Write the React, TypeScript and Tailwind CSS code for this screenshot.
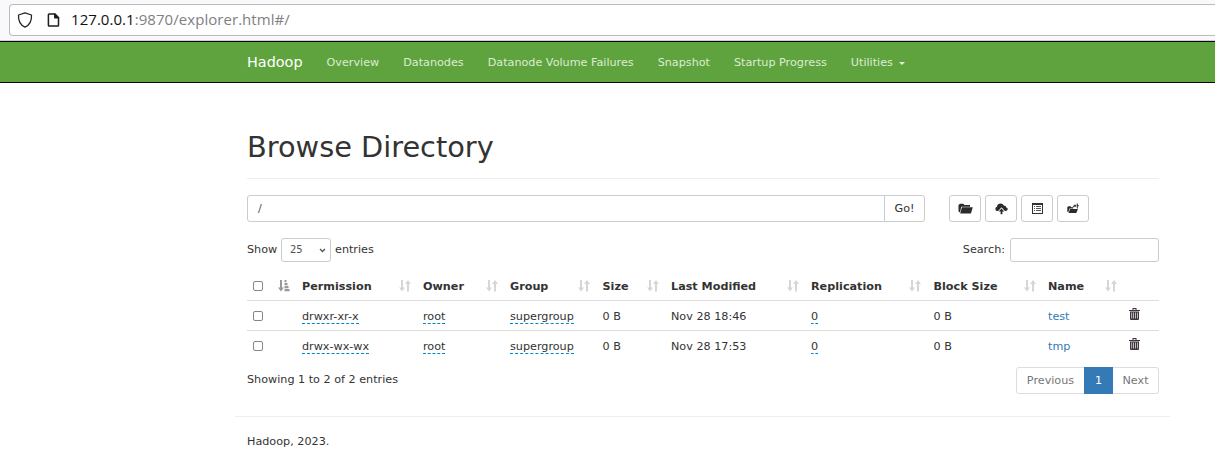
import React from "react";

const columns = ["", "Permission", "Owner", "Group", "Size", "Last Modified", "Replication", "Block Size", "Name"];

const rows = [
  { permission: "drwxr-xr-x", owner: "root", group: "supergroup", size: "0 B", modified: "Nov 28 18:46", replication: "0", block: "0 B", name: "test" },
  { permission: "drwx-wx-wx", owner: "root", group: "supergroup", size: "0 B", modified: "Nov 28 17:53", replication: "0", block: "0 B", name: "tmp" },
];

const navItems = ["Overview", "Datanodes", "Datanode Volume Failures", "Snapshot", "Startup Progress"];

const gridCols = "grid grid-cols-[49px_121px_87px_92.5px_68.5px_140px_122.5px_114.5px_81px_36px]";

function SortIcon() {
  return (
    <svg width="12" height="12" viewBox="0 0 12 12" className="shrink-0" fill="#d6d6d6">
      <path d="M2 0h2v7.500h2L3 11.500 0 7.500h2zM8 11.500h2V4h2L9 0 6 4h2z" />
    </svg>
  );
}

function SortActiveIcon() {
  return (
    <svg width="12" height="12" viewBox="0 0 12 12" className="shrink-0" fill="#999">
      <path d="M2 0h2v7.500h2L3 11.500 0 7.500h2zM6.500 0h2v2.300h-2zM6.500 3h3v2.300h-3zM6.500 6h4v2.300h-4zM6.500 9h5v2.300h-5z" />
    </svg>
  );
}

function CheckBox() {
  return <span className="block h-[10px] w-[10px] rounded-[2px] border border-[#858590] bg-white" />;
}

function FolderIcon() {
  return (
    <svg width="15" height="12" viewBox="0 0 15 12" fill="#2b2b2b">
      <path d="M.5 8.500V2L2 .8h3.200L6.500 2H12v1.700H3.200L2 9.500z" />
      <path d="M3.900 4.300h10.900l-1.900 6.300H2.200z" />
    </svg>
  );
}

function UploadIcon() {
  return (
    <svg width="13" height="12" viewBox="0 0 13 12" fill="#2b2b2b">
      <path d="M2.700 8C1.200 8 .4 7.100.4 5.900c0-1 .7-1.900 1.600-2.100C2.200 1.800 3.700.6 5.600.6c1.400 0 2.500.7 3.100 1.800 1.500 0 2.400.9 2.500 2 1 .2 1.500.9 1.500 1.700C12.700 7.200 11.900 8 10.700 8h-.8L6.500 4.300 3.200 8z" />
      <path d="M6.500 5.400 9.300 8.400H7.400v2.800H5.600V8.400H3.700z" />
    </svg>
  );
}

function ListIcon() {
  return (
    <svg width="11" height="11" viewBox="0 0 11 11" fill="#303035" shapeRendering="crispEdges">
      <path fillRule="evenodd" d="M0 0h11v11H0zM1 2v8h9V2z" />
      <path d="M2 3h1v1H2zM4 3h5v1H4zM2 5h1v1H2zM4 5h5v1H4zM2 7h1v1H2zM4 7h5v1H4z" fill="#55555a" />
    </svg>
  );
}

function FolderMoveIcon() {
  return (
    <svg width="12" height="11" viewBox="0 0 12 11" fill="#2b2b2b">
      <path d="M.3 8.500V4.300l1-1h2.200l.8.900h2v1.300H2.500L1.300 9.500z" />
      <path d="M3 6.100h7.900L9.300 10H1.600z" />
      <path d="M5.700 4.400C5.700 3 6.500 2.200 7.700 2.200V1.100L9.500 2.800 7.700 4.500V3.500C6.900 3.500 6.300 3.800 5.700 4.400zM9.800.5h1v1.700h1v1h-1v2.200h-1z" />
    </svg>
  );
}

function TrashIcon() {
  return (
    <svg width="11" height="13" viewBox="0 0 11 13" fill="#3c333b">
      <path d="M3.500 0h4v2H11v1H0V2h3.500zM4.500 1v1h2V1z" fillRule="evenodd" />
      <path d="M1 3.500h9V11q0 1-1 1H2q-1 0-1-1z" />
      <path d="M2.300 4.500h.8v6h-.8zM4.200 4.500H5v6h-.8zM6.100 4.500h.8v6h-.8zM8 4.500h.8v6H8z" fill="#e2dce0" />
    </svg>
  );
}

function IconButton({ children }: { children: React.ReactNode }) {
  return (
    <button className="flex h-[27px] w-8 items-center justify-center rounded-[3px] border border-[#ccc] bg-white">
      {children}
    </button>
  );
}

function Editable({ children }: { children: React.ReactNode }) {
  return <span className="block h-[15px] w-fit border-b border-dashed border-[#0088cc] leading-[16px]">{children}</span>;
}

export default function App() {
  return (
    <div className="h-[475px] w-full overflow-hidden bg-white font-['DejaVu_Sans',sans-serif] text-[11.200px] text-[#333]">
      <div className="h-[41px] border-b border-[#cfcfd2] bg-[#f9f9fb] pl-[9px] pt-1">
        <div className="flex h-8 items-center rounded-l-[4px] border border-r-0 border-[#bcbcbe] bg-white pl-[7px]">
          <svg width="16" height="16" viewBox="0 0 16 16" fill="none" stroke="#26262b" strokeWidth="1.300" strokeLinejoin="round">
            <path d="M8 .8 14.500 3c.3 5-1.200 9.700-6.500 12.200C2.700 12.700 1.200 8 1.500 3z" />
          </svg>
          <svg width="13" height="14" viewBox="0 0 13 14" className="ml-[14px]" fill="none" stroke="#1c1c20" strokeWidth="1.500" strokeLinejoin="round">
            <path d="M2.200 1h5.600l3.700 3.700v7.500q0 .8-.8.800H2.200q-.8 0-.8-.8V1.800Q1.400 1 2.200 1z" />
            <path d="M7.800 1v3.700h3.700z" fill="#1c1c20" />
          </svg>
          <div className="mb-px ml-[11px] whitespace-nowrap font-['Open_Sans',sans-serif] text-[15px] leading-none tracking-[0.050px] text-[#808085]">
            <span className="text-[#111]">127.0.0.1</span>:9870/explorer.html#/
          </div>
        </div>
      </div>

      <nav className="flex h-[42px] items-center border-y border-[#080808] bg-[#5fa33e] pl-[247px] text-[#dcecd4]">
        <span className="mr-6 mt-px text-[14.400px] text-white">Hadoop</span>
        <div className="mt-[2px] flex gap-6">
          {navItems.map((item) => (
            <span key={item} className="whitespace-nowrap">{item}</span>
          ))}
          <span className="flex items-center">
            Utilities
            <span className="ml-[6px] mt-[2px] border-x-[3px] border-t-[3px] border-x-transparent border-t-[#e4f0de]" />
          </span>
        </div>
      </nav>

      <main className="ml-[247px] w-[912px]">
        <header className="h-24 border-b border-[#eee] pt-[47px]">
          <h1 className="text-[28.800px] leading-[34px]">Browse Directory</h1>
        </header>

        <div className="mt-4 flex h-[27px]">
          <div className="flex w-[638px] items-center rounded-l-[3px] border border-[#ccc] pl-[10px] pt-px text-[#555]">/</div>
          <button className="-ml-px mr-6 w-[41px] rounded-r-[3px] border border-[#ccc] pt-[2px]">Go!</button>
          <div className="flex gap-1">
            <IconButton><FolderIcon /></IconButton>
            <IconButton><UploadIcon /></IconButton>
            <IconButton><ListIcon /></IconButton>
            <IconButton><FolderMoveIcon /></IconButton>
          </div>
        </div>

        <div className="mt-4 flex h-6 items-center justify-between">
          <div className="flex items-center gap-1">
            <span className="w-[30px] whitespace-nowrap">Show</span>
            <div className="flex h-6 w-[50px] items-center justify-between rounded-[3px] border border-[#ccc] pb-px pl-2 pr-1 text-[10px] text-[#555]">
              25
              <svg width="7" height="5" viewBox="0 0 7 5" className="mt-px" fill="none" stroke="#555" strokeWidth="1.300"><path d="M1 1l2.500 2.500L6 1" /></svg>
            </div>
            entries
          </div>
          <div className="flex items-center gap-[5px]">
            Search:
            <div className="h-6 w-[149px] rounded-[3px] border border-[#ccc]" />
          </div>
        </div>

        <section className="mt-[9px]">
          <div className={`${gridCols} h-[30px] border-b border-[#ddd] font-bold`}>
            {columns.map((label, i) => (
              <div key={i} className="flex items-center justify-between whitespace-nowrap pl-[6px] pr-[6.500px]">
                {i === 0 ? <CheckBox /> : <span className="pt-[3px]">{label}</span>}
                {i === 0 ? <SortActiveIcon /> : <SortIcon />}
              </div>
            ))}
          </div>
          {rows.map((row, i) => (
            <div key={row.name} className={`${gridCols} h-[30px] items-center whitespace-nowrap border-b leading-4 *:pl-[6px] ${i === 0 ? "border-[#ddd]" : "border-transparent"}`}>
              <div><CheckBox /></div>
              <div className="pt-px"><Editable>{row.permission}</Editable></div>
              <div className="pt-px"><Editable>{row.owner}</Editable></div>
              <div className="pt-px"><Editable>{row.group}</Editable></div>
              <div className="pt-[2px]">{row.size}</div>
              <div className="pt-[2px]">{row.modified}</div>
              <div className="pt-px"><Editable>{row.replication}</Editable></div>
              <div className="pt-[2px]">{row.block}</div>
              <div className="pt-[2px] text-[#337ab7]">{row.name}</div>
              <div className="pb-[2px]"><TrashIcon /></div>
            </div>
          ))}
        </section>

        <div className="mt-[6px] flex h-[27px] justify-between">
          <div className="leading-[25px]">Showing 1 to 2 of 2 entries</div>
          <div className="flex text-center leading-[25px] text-[#777]">
            <span className="w-[69px] rounded-l-[3px] border border-[#ddd]">Previous</span>
            <span className="-ml-px w-[29px] border border-[#337ab7] bg-[#337ab7] text-white">1</span>
            <span className="w-[46px] rounded-r-[3px] border border-l-0 border-[#ddd]">Next</span>
          </div>
        </div>
      </main>

      <footer className="ml-[235px] mt-[22px] w-[935px] border-t border-[#eee] pl-3 pt-[17px] leading-4">Hadoop, 2023.</footer>
    </div>
  );
}
